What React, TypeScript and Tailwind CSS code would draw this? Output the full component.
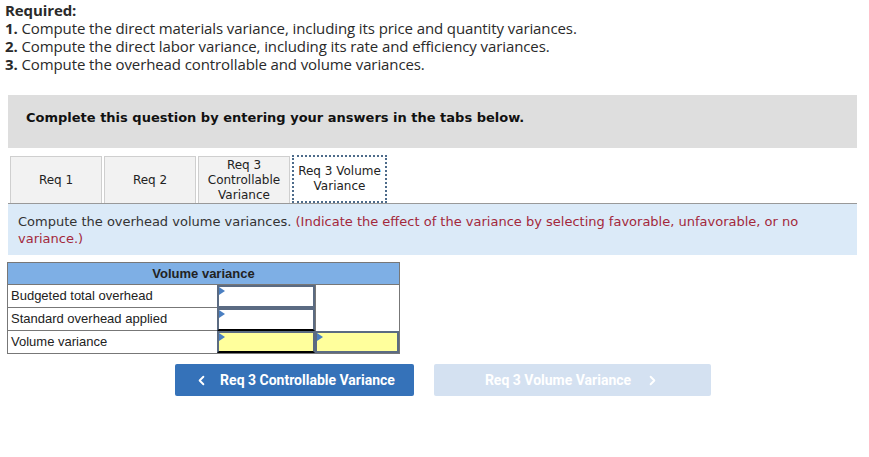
import { ChevronLeft, ChevronRight } from 'lucide-react'

const tabs = ['Req 1', 'Req 2', 'Req 3 Controllable Variance']

function Cell({ yellow, dark }: { yellow?: boolean; dark?: boolean }) {
  return (
    <div
      className={`relative h-full border-2 ${dark ? 'border-b-black' : ''} border-[#5b6b82] ${yellow ? 'bg-[#ffff9c]' : 'bg-white'}`}
    >
      <span className="absolute left-0 top-0 w-0 h-0 border-y-[4px] border-y-transparent border-l-[6px] border-l-[#4a7fc1]" />
    </div>
  )
}

export default function App() {
  return (
    <div className="w-[869px] h-[457px] bg-white relative">
      <div className="pl-[5px] pt-[1px] text-[15px] leading-[18px] text-[#2a2a2a] font-['Open_Sans',sans-serif] tracking-[-0.1px]">
        <div className="font-bold">Required:</div>
        <div>
          <b>1.</b> Compute the direct materials variance, including its price and quantity variances.
        </div>
        <div>
          <b>2.</b> Compute the direct labor variance, including its rate and efficiency variances.
        </div>
        <div>
          <b>3.</b> Compute the overhead controllable and volume variances.
        </div>
      </div>

      <div className="ml-2 w-[849px] mt-[22px] h-[53px] bg-[#dedede] pt-[13px] pl-[18px] font-['DejaVu_Sans',sans-serif] text-[13px] font-bold text-[#111]">
        Complete this question by entering your answers in the tabs below.
      </div>

      <div className="mt-[8px] ml-[10px] flex gap-[2px] h-[47px] font-['DejaVu_Sans',sans-serif] text-[12px] text-[#222] leading-[15px]">
        {tabs.map((t) => (
          <div
            key={t}
            className="w-[92px] bg-[#f2f2f2] border border-[#cfcfcf] border-b-0 flex items-center justify-center text-center px-1"
          >
            {t}
          </div>
        ))}
        <div className="w-[95px] -mt-[1px] h-[48px] bg-white border-2 border-dotted border-[#4d6b8a] flex items-center justify-center text-center">
          Req 3 Volume Variance
        </div>
      </div>

      <div className="ml-2 w-[849px] h-[52px] bg-[#dbeaf8] border-t border-[#999] pl-[10px] pt-[9px] font-['DejaVu_Sans',sans-serif] text-[13px] leading-[17px] text-[#333]">
        Compute the overhead volume variances.{' '}
        <span className="text-[#a3283b]">
          (Indicate the effect of the variance by selecting favorable, unfavorable, or no variance.)
        </span>
      </div>

      <div className="mt-[7px] ml-[7px] w-[393px] border border-[#777] font-['Liberation_Sans',Arial,sans-serif] text-[13px] text-[#222]">
        <div className="h-[22px] bg-[#7eafe5] border-b border-[#777] flex items-center justify-center font-bold">
          Volume variance
        </div>
        <div className="grid grid-cols-[209px_98px_1fr]">
          <div className="h-[23px] border-b border-[#777] flex items-center pl-[3px]">Budgeted total overhead</div>
          <div className="h-[23px]"><Cell /></div>
          <div className="h-[23px] border-l border-[#777]" />
          <div className="h-[23px] border-b border-[#777] flex items-center pl-[3px]">Standard overhead applied</div>
          <div className="h-[23px]"><Cell dark /></div>
          <div className="h-[23px] border-l border-[#777]" />
          <div className="h-[22px] flex items-center pl-[3px]">Volume variance</div>
          <div className="h-[22px]"><Cell yellow dark /></div>
          <div className="h-[22px]"><Cell yellow /></div>
        </div>
      </div>

      <div className="mt-[10px] ml-[175px] flex gap-[20px] font-['Roboto',sans-serif] text-[14px] font-bold">
        <div className="w-[239px] h-[32px] bg-[#3572b9] rounded-[2px] text-white flex items-center justify-center gap-[11px]">
          <ChevronLeft size={15} strokeWidth={3} />
          Req 3 Controllable Variance
        </div>
        <div className="w-[277px] h-[32px] bg-[#d4e1f1] rounded-[2px] text-white flex items-center justify-center gap-[14px]">
          Req 3 Volume Variance
          <ChevronRight size={15} strokeWidth={3} />
        </div>
      </div>
    </div>
  )
}
